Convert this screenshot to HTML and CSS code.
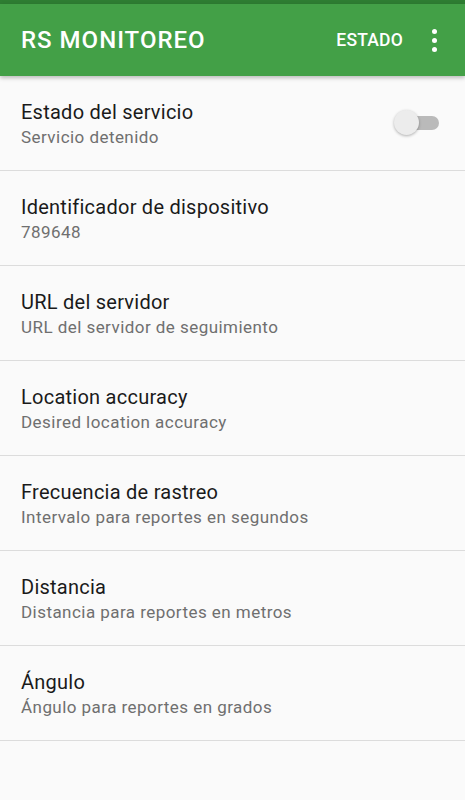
FILE: index.html
```html
<!DOCTYPE html>
<html>
<head>
    <link rel="stylesheet" href="styles.css">
</head>
<body>
    <div class="status-bar"></div>
    <div class="app-bar">
        <div class="app-title">RS MONITOREO</div>
        <div class="app-action">ESTADO</div>
        <div class="overflow">
            <span></span><span></span><span></span>
        </div>
    </div>

    <div class="pref-list">
        <div class="pref">
            <div class="pref-text">
                <div class="pref-title">Estado del servicio</div>
                <div class="pref-summary">Servicio detenido</div>
            </div>
            <div class="switch">
                <div class="switch-track"></div>
                <div class="switch-thumb"></div>
            </div>
        </div>
        <div class="pref">
            <div class="pref-text">
                <div class="pref-title">Identificador de dispositivo</div>
                <div class="pref-summary">789648</div>
            </div>
        </div>
        <div class="pref">
            <div class="pref-text">
                <div class="pref-title">URL del servidor</div>
                <div class="pref-summary">URL del servidor de seguimiento</div>
            </div>
        </div>
        <div class="pref">
            <div class="pref-text">
                <div class="pref-title">Location accuracy</div>
                <div class="pref-summary">Desired location accuracy</div>
            </div>
        </div>
        <div class="pref">
            <div class="pref-text">
                <div class="pref-title">Frecuencia de rastreo</div>
                <div class="pref-summary">Intervalo para reportes en segundos</div>
            </div>
        </div>
        <div class="pref">
            <div class="pref-text">
                <div class="pref-title">Distancia</div>
                <div class="pref-summary">Distancia para reportes en metros</div>
            </div>
        </div>
        <div class="pref">
            <div class="pref-text">
                <div class="pref-title">Ángulo</div>
                <div class="pref-summary">Ángulo para reportes en grados</div>
            </div>
        </div>
    </div>
</body>
</html>
```

FILE: styles.css
```css
body {
    margin: 0;
    background: #fafafa;
    font-family: Roboto, "Noto Sans", sans-serif;
}
.status-bar {
    height: 4px;
    background: #2e7d32;
}
.app-bar {
    height: 72px;
    background: #43a047;
    color: white;
    display: flex;
    align-items: center;
    padding: 0 0 0 21px;
    box-shadow: 0 2px 4px rgba(0, 0, 0, 0.25);
    position: relative;
}
.app-title {
    flex: 1;
    font-size: 24px;
    font-weight: 500;
    letter-spacing: 1px;
}
.app-action {
    font-size: 17.5px;
    font-weight: 500;
    letter-spacing: 0.2px;
}
.overflow {
    width: 62px;
    display: flex;
    flex-direction: column;
    align-items: center;
    gap: 4px;
    margin-top: 1px;
}
.overflow span {
    width: 5px;
    height: 5px;
    border-radius: 50%;
    background: white;
}
.pref {
    height: 94px;
    border-bottom: 1px solid #dcdcdc;
    display: flex;
    align-items: center;
    padding: 0 21px;
}
.pref-text {
    flex: 1;
    margin-top: 2px;
}
.pref-title {
    font-size: 20px;
    letter-spacing: 0.25px;
    color: #1a1a1a;
    line-height: 26px;
}
.pref-summary {
    font-size: 17px;
    letter-spacing: 0.45px;
    color: #6f6f6f;
    line-height: 24px;
}
.switch {
    width: 45px;
    height: 26px;
    position: relative;
    margin-right: 5px;
}
.switch-track {
    position: absolute;
    left: 4px;
    top: 6px;
    width: 41px;
    height: 14px;
    border-radius: 7px;
    background: #bababa;
}
.switch-thumb {
    position: absolute;
    left: 0;
    top: 0;
    width: 25px;
    height: 25px;
    border-radius: 50%;
    background: #ececec;
    box-shadow: 0 1px 3px rgba(0, 0, 0, 0.3);
}
```
